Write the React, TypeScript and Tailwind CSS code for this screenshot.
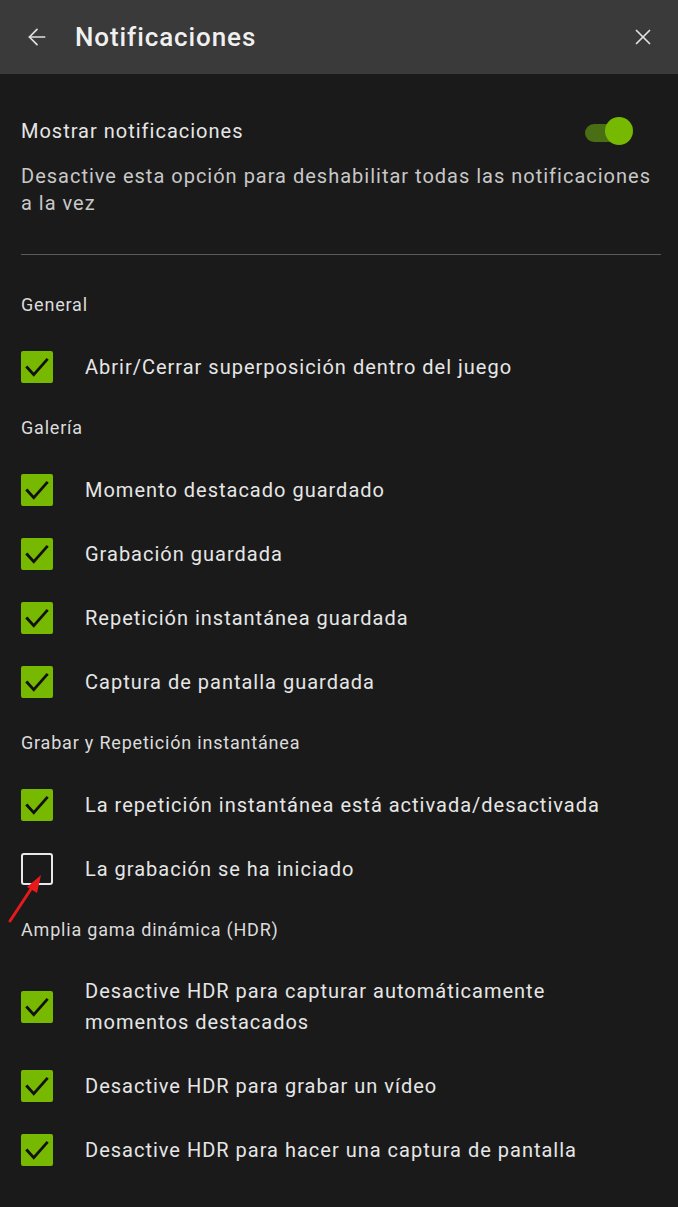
import { ArrowLeft, X } from "lucide-react";

type Item = { label: string; checked: boolean };
type Section = { title: string; items: Item[] };

const sections: Section[] = [
  {
    title: "General",
    items: [{ label: "Abrir/Cerrar superposición dentro del juego", checked: true }],
  },
  {
    title: "Galería",
    items: [
      { label: "Momento destacado guardado", checked: true },
      { label: "Grabación guardada", checked: true },
      { label: "Repetición instantánea guardada", checked: true },
      { label: "Captura de pantalla guardada", checked: true },
    ],
  },
  {
    title: "Grabar y Repetición instantánea",
    items: [
      { label: "La repetición instantánea está activada/desactivada", checked: true },
      { label: "La grabación se ha iniciado", checked: false },
    ],
  },
  {
    title: "Amplia gama dinámica (HDR)",
    items: [
      { label: "Desactive HDR para capturar automáticamente momentos destacados", checked: true },
      { label: "Desactive HDR para grabar un vídeo", checked: true },
      { label: "Desactive HDR para hacer una captura de pantalla", checked: true },
    ],
  },
];

function Checkbox({ checked }: { checked: boolean }) {
  if (!checked) {
    return <div className="w-[32px] h-[32px] shrink-0 rounded-[3px] border-2 border-[#e8e8e8]" />;
  }
  return (
    <div className="w-[32px] h-[32px] shrink-0 rounded-[2px] bg-[#76b900] flex items-center justify-center">
      <svg width="26" height="26" viewBox="0 0 24 24" fill="none">
        <path d="M3 12.5 L9 19 L21 5.5" stroke="#111" strokeWidth="2.6" strokeLinecap="square" />
      </svg>
    </div>
  );
}

export default function App() {
  return (
    <div className="min-h-[1207px] w-[678px] bg-[#1a1a1a] text-[#e6e6e6] font-['Roboto',sans-serif] tracking-[1px] relative">
      {/* Header */}
      <div className="h-[74px] bg-[#3a3a3a] flex items-center pl-[24px] pr-[22px]">
        <ArrowLeft size={26} strokeWidth={1.6} className="text-[#e0e0e0]" />
        <h1 className="ml-[25px] text-[26px] font-medium text-[#f0f0f0] flex-1 tracking-[0.9px]">Notificaciones</h1>
        <X size={26} strokeWidth={1.6} className="text-[#e0e0e0]" />
      </div>

      <div className="pl-[21px] pr-[17px] pt-[43px] pb-[25px]">
        {/* Master toggle */}
        <div className="flex items-center justify-between h-[28px]">
          <span className="text-[20px]">Mostrar notificaciones</span>
          <div className="relative w-[50px] h-[28px] mr-[28px]">
            <div className="absolute left-[2px] top-[7px] w-[36px] h-[18px] rounded-full bg-[#4a6e14]" />
            <div className="absolute right-0 top-0 w-[28px] h-[28px] rounded-full bg-[#76b900]" />
          </div>
        </div>
        <p className="mt-[18px] text-[20px] leading-[27px] text-[#c8c8c8]">
          Desactive esta opción para deshabilitar todas las notificaciones a la vez
        </p>

        <div className="mt-[37px] h-px bg-[#5a5a5a]" />

        {sections.map((s, i) => (
          <div key={s.title} className={i === 0 ? "mt-[38px]" : "mt-[17px]"}>
            <div className="text-[18px] leading-[24px] text-[#dcdcdc] tracking-[0.8px]">{s.title}</div>
            <div className="mt-[18px]">
              {s.items.map((it) => (
                <div key={it.label} className="flex items-center min-h-[64px] py-[16px]">
                  <Checkbox checked={it.checked} />
                  <span className="ml-[32px] text-[20px] leading-[31px] pr-[40px]">{it.label}</span>
                </div>
              ))}
            </div>
          </div>
        ))}
      </div>

      {/* annotation arrow */}
      <svg className="absolute left-0 top-[868px]" width="60" height="60" viewBox="0 0 60 60">
        <line x1="10" y1="53" x2="33" y2="18" stroke="#e8191d" strokeWidth="3" strokeLinecap="round" />
        <polygon points="41,7 37,25 27,19" fill="#e8191d" />
      </svg>
    </div>
  );
}
